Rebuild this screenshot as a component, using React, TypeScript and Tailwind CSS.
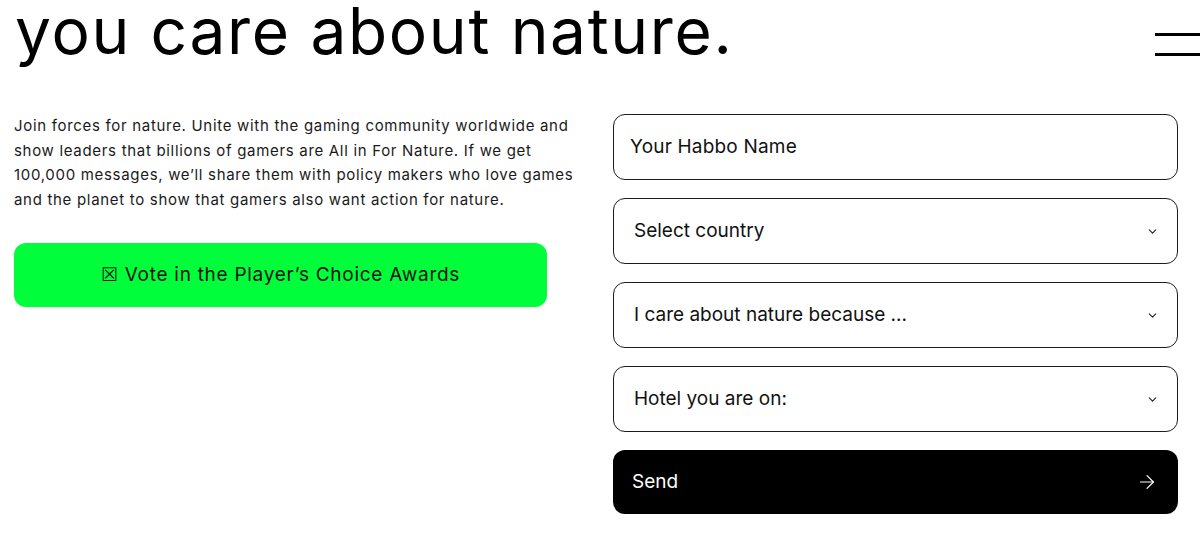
import { ChevronDown, ArrowRight } from "lucide-react";

const fields = ["Select country", "I care about nature because ...", "Hotel you are on:"];

const SelectBox = ({ label }: { label: string }) => {
  return (
    <div className="flex h-[66px] items-center justify-between rounded-[12px] border-[1.5px] border-[#1c1c1c] bg-white pl-[20px] pr-[18px]">
      <span className="text-[19px] text-[#111]">{label}</span>
      <ChevronDown size={13} strokeWidth={2} className="text-[#222]" />
    </div>
  );
};

export default function App() {
  return (
    <div
      className="h-[535px] w-[1200px] overflow-hidden bg-white text-black"
      style={{ fontFamily: "Inter, 'Liberation Sans', sans-serif" }}
    >
      <div className="flex items-start justify-between pl-[15px]">
        <h1 className="-mt-[1px] text-[64px] leading-[64px] font-normal tracking-[0.026em]">
          you care about nature.
        </h1>
        <div className="mt-[33px] -mr-[8px] flex w-[53px] flex-col gap-[17px]">
          <span className="block h-[3px] bg-black" />
          <span className="block h-[3px] bg-black" />
        </div>
      </div>

      <div className="mt-[51px] flex justify-between pl-[14px] pr-[22px]">
        <div className="w-[575px]">
          <p className="whitespace-nowrap text-[15px] leading-[24.5px] tracking-[0.046em] text-[#1a1a1a]">
            Join forces for nature. Unite with the gaming community worldwide and
            <br />
            show leaders that billions of gamers are All in For Nature. If we get
            <br />
            100,000 messages, we’ll share them with policy makers who love games
            <br />
            and the planet to show that gamers also want action for nature.
          </p>
          <button className="mt-[31px] flex h-[64px] w-[533px] items-center justify-center rounded-[12px] bg-[#00ff3a] text-[19px] tracking-[0.038em] text-[#111]">
            ☒ Vote in the Player’s Choice Awards
          </button>
        </div>

        <div className="flex w-[565px] flex-col gap-[18px]">
          <div className="flex h-[66px] items-center rounded-[12px] border-[1.5px] border-[#1c1c1c] bg-white pl-[16px]">
            <span className="text-[19px] tracking-[0.01em] text-[#111]">Your Habbo Name</span>
          </div>
          {fields.map((f) => (
            <SelectBox key={f} label={f} />
          ))}
          <button className="flex h-[64px] items-center justify-between rounded-[12px] bg-black pl-[19px] pr-[20px] text-white">
            <span className="text-[19px]">Send</span>
            <ArrowRight size={22} strokeWidth={1.3} />
          </button>
        </div>
      </div>
    </div>
  );
}
